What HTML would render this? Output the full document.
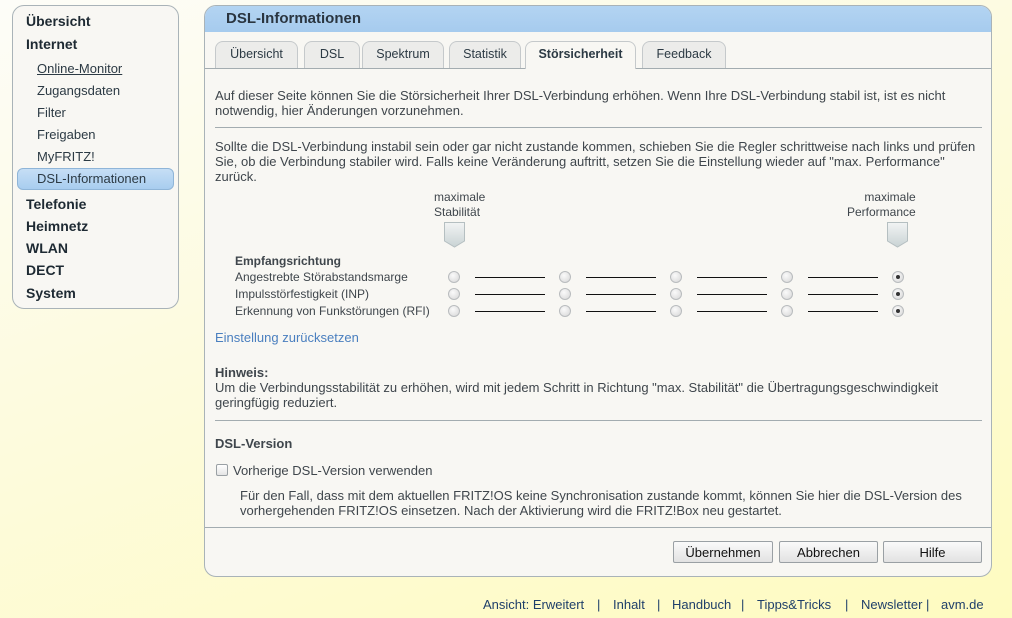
<!DOCTYPE html>
<html><head><meta charset="utf-8"><style>
*{margin:0;padding:0;box-sizing:border-box}
body{width:1012px;height:618px;overflow:hidden;position:relative;font-family:"Liberation Sans",Arial,sans-serif;font-size:12px;color:#3f464c;background:linear-gradient(160deg,#fdfdf8 0%,#fdfbe0 40%,#fefbc0 100%)}
.a{position:absolute;white-space:nowrap}
.p{font-size:13px;line-height:15px}
.f{position:absolute;top:597px;font-size:13px;color:#1f3f6a;white-space:nowrap}
#side{position:absolute;left:12px;top:5px;width:167px;height:304px;border:1px solid #a9b3b8;border-radius:12px;background:#f8f7f3}
.m{position:absolute;left:13px;font-size:14px;font-weight:bold;color:#1e2a33}
.s{position:absolute;left:24px;font-size:13px;color:#2c3a44}
#panel{position:absolute;left:204px;top:5px;width:788px;height:572px;border:1px solid #a9b3b8;border-radius:12px;background:#f8f7f3;overflow:hidden}
#hd{position:absolute;left:0;top:0;right:0;height:26px;background:linear-gradient(#b3d4f2,#a6cbee);font-size:15px;font-weight:bold;color:#2a3540;padding:4px 0 0 21px}
.tab{position:absolute;top:35px;height:27px;border:1px solid #c5c9cb;border-bottom:none;border-radius:8px 8px 0 0;background:#ececea;font-size:12.5px;color:#2c3a44;text-align:center;padding-top:5px}
.hr{position:absolute;height:1px;background:#a3acb0}
.r{position:absolute;width:12px;height:12px;border-radius:50%;border:1px solid #b9bcbe;background:radial-gradient(circle at 40% 35%,#fafafa,#d6d6d6)}
.r.on::after{content:"";position:absolute;left:3px;top:3px;width:4px;height:4px;border-radius:50%;background:#333}
.ln{position:absolute;height:1px;width:70px;background:#111}
.btn{position:absolute;top:535px;height:22px;border:1px solid #9aa0a4;border-radius:2px;background:linear-gradient(#fafafa,#e2e2e2);font-size:13px;color:#111;text-align:center;padding-top:3px}
.mk{position:absolute;width:21px;height:26px}
</style></head><body>
<div id="side">
<div class="m" style="top:7px">Übersicht</div>
<div class="m" style="top:30px">Internet</div>
<div class="s" style="top:55px;text-decoration:underline">Online-Monitor</div>
<div class="s" style="top:77px">Zugangsdaten</div>
<div class="s" style="top:99px">Filter</div>
<div class="s" style="top:121px">Freigaben</div>
<div class="s" style="top:143px">MyFRITZ!</div>
<div style="position:absolute;left:4px;top:162px;width:157px;height:22px;border:1px solid #8fb5d8;border-radius:6px;background:linear-gradient(#c6def5,#a8cdef)"></div>
<div class="s" style="top:165px">DSL-Informationen</div>
<div class="m" style="top:190px">Telefonie</div>
<div class="m" style="top:212px">Heimnetz</div>
<div class="m" style="top:234px">WLAN</div>
<div class="m" style="top:256px">DECT</div>
<div class="m" style="top:279px">System</div>
</div>
<div id="panel">
<div id="hd">DSL-Informationen</div>
<div class="tab" style="left:10px;width:83px">Übersicht</div>
<div class="tab" style="left:99px;width:56px">DSL</div>
<div class="tab" style="left:157px;width:82px">Spektrum</div>
<div class="tab" style="left:244px;width:72px">Statistik</div>
<div class="tab" style="left:320px;width:111px;background:#f8f7f3;height:28px;font-weight:bold;z-index:2">Störsicherheit</div>
<div class="tab" style="left:437px;width:84px">Feedback</div>
<div class="hr" style="left:0;right:0;top:62px"></div>
<div class="a p" style="left:10px;top:82px">Auf dieser Seite können Sie die Störsicherheit Ihrer DSL-Verbindung erhöhen. Wenn Ihre DSL-Verbindung stabil ist, ist es nicht<br>notwendig, hier Änderungen vorzunehmen.</div>
<div class="hr" style="left:10px;width:767px;top:121px"></div>
<div class="a p" style="left:10px;top:133px">Sollte die DSL-Verbindung instabil sein oder gar nicht zustande kommen, schieben Sie die Regler schrittweise nach links und prüfen<br>Sie, ob die Verbindung stabiler wird. Falls keine Veränderung auftritt, setzen Sie die Einstellung wieder auf "max. Performance"<br>zurück.</div>
<div class="a" style="left:229px;top:184px;line-height:15px">maximale<br>Stabilität</div>
<div class="a" style="left:642px;top:184px;line-height:15px;text-align:right">maximale<br>Performance</div>
<svg class="mk" style="left:239px;top:216px" viewBox="0 0 21 26"><defs><linearGradient id="g" x1="0" y1="0" x2="0" y2="1"><stop offset="0" stop-color="#f2f4f4"/><stop offset="1" stop-color="#c9d3d4"/></linearGradient></defs><path d="M0.5 0.5H20.5V19L10.5 25L0.5 19Z" fill="url(#g)" stroke="#b5bfc1"/></svg>
<svg class="mk" style="left:682px;top:216px" viewBox="0 0 21 26"><path d="M0.5 0.5H20.5V19L10.5 25L0.5 19Z" fill="url(#g)" stroke="#b5bfc1"/></svg>
<div class="a" style="left:30px;top:248px;font-weight:bold">Empfangsrichtung</div>
<div class="a" style="left:30px;top:264px">Angestrebte Störabstandsmarge</div>
<div class="a" style="left:30px;top:281px">Impulsstörfestigkeit (INP)</div>
<div class="a" style="left:30px;top:298px">Erkennung von Funkstörungen (RFI)</div>
<div class="r" style="left:243px;top:265px"></div><div class="ln" style="left:270px;top:271px"></div>
<div class="r" style="left:354px;top:265px"></div><div class="ln" style="left:381px;top:271px"></div>
<div class="r" style="left:465px;top:265px"></div><div class="ln" style="left:492px;top:271px"></div>
<div class="r" style="left:576px;top:265px"></div><div class="ln" style="left:603px;top:271px"></div>
<div class="r on" style="left:687px;top:265px"></div>
<div class="r" style="left:243px;top:282px"></div><div class="ln" style="left:270px;top:288px"></div>
<div class="r" style="left:354px;top:282px"></div><div class="ln" style="left:381px;top:288px"></div>
<div class="r" style="left:465px;top:282px"></div><div class="ln" style="left:492px;top:288px"></div>
<div class="r" style="left:576px;top:282px"></div><div class="ln" style="left:603px;top:288px"></div>
<div class="r on" style="left:687px;top:282px"></div>
<div class="r" style="left:243px;top:299px"></div><div class="ln" style="left:270px;top:305px"></div>
<div class="r" style="left:354px;top:299px"></div><div class="ln" style="left:381px;top:305px"></div>
<div class="r" style="left:465px;top:299px"></div><div class="ln" style="left:492px;top:305px"></div>
<div class="r" style="left:576px;top:299px"></div><div class="ln" style="left:603px;top:305px"></div>
<div class="r on" style="left:687px;top:299px"></div>
<div class="a" style="left:10px;top:324px;font-size:13px;color:#4a7fbf">Einstellung zurücksetzen</div>
<div class="a" style="left:10px;top:359px;font-size:13px;font-weight:bold">Hinweis:</div>
<div class="a p" style="left:10px;top:374px">Um die Verbindungsstabilität zu erhöhen, wird mit jedem Schritt in Richtung "max. Stabilität" die Übertragungsgeschwindigkeit<br>geringfügig reduziert.</div>
<div class="hr" style="left:10px;width:767px;top:414px"></div>
<div class="a" style="left:10px;top:430px;font-size:13px;font-weight:bold">DSL-Version</div>
<div style="position:absolute;left:11px;top:458px;width:12px;height:12px;border:1px solid #9aa0a4;border-radius:2px;background:linear-gradient(#fff,#e4e4e4)"></div>
<div class="a" style="left:28px;top:457px;font-size:13px">Vorherige DSL-Version verwenden</div>
<div class="a p" style="left:35px;top:482px">Für den Fall, dass mit dem aktuellen FRITZ!OS keine Synchronisation zustande kommt, können Sie hier die DSL-Version des<br>vorhergehenden FRITZ!OS einsetzen. Nach der Aktivierung wird die FRITZ!Box neu gestartet.</div>
<div class="hr" style="left:0;right:0;top:521px"></div>
<div class="btn" style="left:468px;width:100px">Übernehmen</div>
<div class="btn" style="left:574px;width:99px">Abbrechen</div>
<div class="btn" style="left:678px;width:99px">Hilfe</div>
</div>
<div class="f" style="left:483px">Ansicht: Erweitert</div>
<div class="f" style="left:597px">|</div>
<div class="f" style="left:613px">Inhalt</div>
<div class="f" style="left:657px">|</div>
<div class="f" style="left:672px">Handbuch</div>
<div class="f" style="left:741px">|</div>
<div class="f" style="left:757px">Tipps&amp;Tricks</div>
<div class="f" style="left:845px">|</div>
<div class="f" style="left:861px">Newsletter</div>
<div class="f" style="left:926px">|</div>
<div class="f" style="left:941px">avm.de</div>
</body></html>
